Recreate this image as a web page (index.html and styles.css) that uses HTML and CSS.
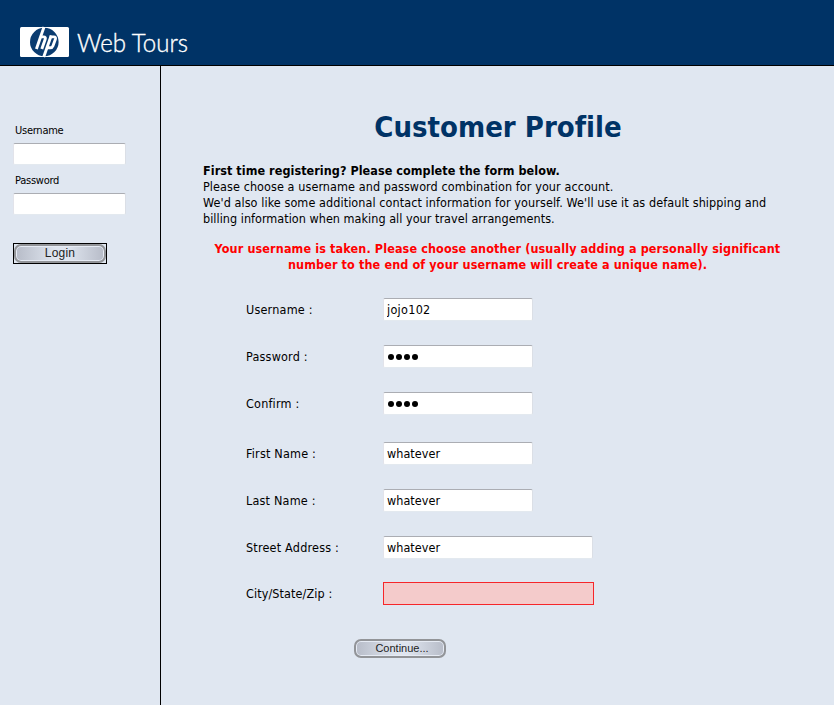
FILE: index.html
```html
<!DOCTYPE html>
<html lang="en">
<head>
<meta charset="utf-8">
<title>Web Tours</title>
<link rel="stylesheet" href="styles.css">
</head>
<body>
<header class="banner">
  <svg class="logo" width="174" height="34" viewBox="0 0 174 34" role="img" aria-label="hp Web Tours">
    <rect x="0" y="2" width="49" height="30" rx="1.5" fill="#fff"/>
    <circle cx="24.3" cy="17" r="14.3" fill="#0b3c70"/>
    <g fill="none" stroke="#fff" stroke-width="2.9" stroke-linejoin="round">
      <path d="M24 2 L16.4 24"/>
      <path d="M20.3 11.9 H23.6 Q26 11.9 25.2 14.2 L21.8 24"/>
      <path d="M31.2 10.6 L23.7 32"/>
      <path d="M29.8 11.9 H33.8 Q36.1 11.9 35.4 14.2 L32.9 21 Q32.2 22.8 30.3 22.8 H27"/>
    </g>
    <text class="logo-text" x="57" y="27" textLength="111" lengthAdjust="spacingAndGlyphs">Web Tours</text>
  </svg>
</header>
<div class="frames">
  <form class="sidebar">
    <label for="login-user">Username</label>
    <input class="field login" id="login-user" type="text">
    <label for="login-pass">Password</label>
    <input class="field login" id="login-pass" type="password">
    <button class="btn-focus" type="button"><span class="pill login-pill">Login</span></button>
  </form>
  <main class="content">
    <h1>Customer Profile</h1>
    <div class="intro">
      <b>First time registering? Please complete the form below.</b><br>
      Please choose a username and password combination for your account.<br>
      We'd also like some additional contact information for yourself. We'll use it as default shipping and<br>
      <span class="intro-end">billing information when making all your travel arrangements.</span>
    </div>
    <p class="error">Your username is taken. Please choose another (usually adding a personally significant<br>number to the end of your username will create a unique name).</p>
    <form class="profile">
      <div class="row"><label for="user">Username :</label><input class="field" id="user" type="text" value="jojo102"></div>
      <div class="row"><label for="pass">Password :</label><div class="field dots" id="pass"><i></i><i></i><i></i><i></i></div></div>
      <div class="row last-credential"><label for="confirm">Confirm :</label><div class="field dots" id="confirm"><i></i><i></i><i></i><i></i></div></div>
      <div class="row"><label for="first">First Name :</label><input class="field" id="first" type="text" value="whatever"></div>
      <div class="row"><label for="last">Last Name :</label><input class="field" id="last" type="text" value="whatever"></div>
      <div class="row street"><label for="street">Street Address :</label><input class="field wide" id="street" type="text" value="whatever"></div>
      <div class="row city"><label for="city">City/State/Zip :</label><input class="field invalid" id="city" type="text"></div>
      <button class="pill continue" type="button">Continue...</button>
    </form>
  </main>
</div>
</body>
</html>
```
FILE: styles.css
```css
* { box-sizing: border-box; }

body {
  margin: 0;
  height: 705px;
  overflow: hidden;
  background: #e0e7f1;
  color: #000;
  font: 12.5px/16px "DejaVu Sans Condensed", "DejaVu Sans", sans-serif;
  font-stretch: condensed;
}

.banner {
  height: 66px;
  padding: 25px 0 0 20px;
  background: #003366;
  border-bottom: 1px solid #000;
}

.logo { display: block; }

.logo-text {
  fill: #fff;
  stroke: #fff;
  stroke-width: 0.35px;
  font: 300 25px Lato, sans-serif;
}

.frames { display: flex; height: 639px; }

.sidebar {
  width: 161px;
  padding: 57px 0 0 13px;
  border-right: 1px solid #000;
  font-size: 11px;
}

.sidebar label {
  display: block;
  height: 16px;
  margin-bottom: 4px;
  padding-left: 2px;
  letter-spacing: -0.25px;
}

.field {
  display: block;
  width: 150px;
  height: 23px;
  padding: 0 3px 1px;
  background: #fff;
  border: 1px solid;
  border-color: #abadb3 #dbdfe6 #e3e9ef #e2e3ea;
  border-radius: 2px;
  color: #000;
  font: inherit;
  letter-spacing: 0.05px;
}

#user { letter-spacing: 0.3px; }

.field.login { width: 113px; height: 22px; margin-bottom: 8px; }

.btn-focus {
  display: block;
  width: 94px;
  height: 21px;
  margin-top: 28px;
  padding: 0;
  background: #e0e7f1;
  border: 1px solid #000;
}

.pill {
  display: block;
  width: 92px;
  height: 19px;
  padding: 0;
  border: 2px solid #929498;
  border-radius: 7px;
  background: linear-gradient(90deg, #b7bcc8, #dfe5ef 45%, #dfe5ef 58%, #b7bcc8);
  box-shadow: inset 0 0 0 1px #e6ebf4;
  color: #222;
  font: 11px/15px "Liberation Sans", sans-serif;
  text-align: center;
}

.login-pill { font-size: 12px; letter-spacing: 0.2px; }

.content { flex: 1; padding: 43px 0 0 42px; }

h1 {
  width: 590px;
  margin: 0 0 17px;
  color: #003366;
  font-size: 29px;
  font-variant-ligatures: none;
  line-height: 37px;
  text-align: center;
}

.intro { white-space: nowrap; letter-spacing: 0.08px; }
.intro b { letter-spacing: 0.05px; }
.intro-end { letter-spacing: 0.03px; }

.error {
  width: 589px;
  margin: 14px 0 0;
  color: #f00;
  font-weight: bold;
  letter-spacing: 0.12px;
  text-align: center;
  white-space: nowrap;
}

.profile { padding: 25px 0 0 43px; }

.row { display: flex; align-items: center; height: 23px; margin-bottom: 24px; }
.row label { width: 137px; letter-spacing: 0.2px; }
.row.last-credential { margin-bottom: 27px; }
.row.street { margin-bottom: 23px; }
.row.city label { letter-spacing: 0.1px; }
.field.wide { width: 210px; }

.dots { display: flex; gap: 2px; align-items: center; padding: 1px 4px 0; }
.dots i { width: 6px; height: 6px; border-radius: 50%; background: #000; }

.field.invalid {
  width: 211px;
  height: 23px;
  background: #f4cbcb;
  border: 1px solid #f6262a;
  border-radius: 0;
}

.continue { margin: 34px 0 0 108px; padding-left: 4px; }
```
